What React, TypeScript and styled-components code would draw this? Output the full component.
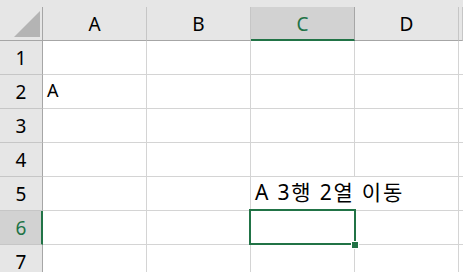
import * as React from "react";
import styled, { createGlobalStyle, css } from "styled-components";

const GREEN = "#217346";
const COLS = "43px repeat(4, 104px) 1fr";

const GlobalStyle = createGlobalStyle`
  html, body {
    margin: 0;
    padding: 0;
    background: #ffffff;
    overflow: hidden;
  }
`;

const Sheet = styled.div`
  width: 463px;
  height: 272px;
  overflow: hidden;
  background: #ffffff;
  font-family: "Noto Sans", "Noto Sans CJK KR", sans-serif;
  color: #000000;
`;

const HeaderRow = styled.div`
  display: grid;
  grid-template-columns: ${COLS};
  padding-top: 7px;
  background: #e6e6e6;
`;

const Corner = styled.div`
  height: 34px;
  box-sizing: border-box;
  border-right: 1px solid #a6a6a6;
  border-bottom: 1px solid #a6a6a6;
  display: flex;
  justify-content: flex-end;
  align-items: flex-end;
  padding: 0 2px 3px 0;
`;

const ColHeader = styled.div<{ $active?: boolean }>`
  height: 34px;
  box-sizing: border-box;
  border-right: 1px solid #c6c6c6;
  border-bottom: 1px solid #a6a6a6;
  display: flex;
  align-items: center;
  justify-content: center;
  font-size: 19px;
  padding-top: 1px;
  ${({ $active }) =>
    $active &&
    css`
      background: #d2d2d2;
      color: ${GREEN};
      border-bottom: 2px solid ${GREEN};
      border-right-color: #a6a6a6;
    `}
`;

const Body = styled.div`
  display: grid;
  grid-template-columns: ${COLS};
  grid-auto-rows: 34px;
`;

const RowHeader = styled.div<{ $active?: boolean }>`
  box-sizing: border-box;
  background: #e6e6e6;
  border-right: 1px solid #a6a6a6;
  border-bottom: 1px solid #c6c6c6;
  display: flex;
  align-items: center;
  justify-content: center;
  font-size: 19px;
  ${({ $active }) =>
    $active &&
    css`
      background: #d2d2d2;
      color: ${GREEN};
      border-right: 2px solid ${GREEN};
      padding-left: 1px;
    `}
`;

const Cell = styled.div<{ $spill?: boolean; $selected?: boolean }>`
  position: relative;
  box-sizing: border-box;
  border-right: 1px solid ${({ $spill }) => ($spill ? "transparent" : "#d4d4d4")};
  border-bottom: 1px solid #d4d4d4;
  display: flex;
  align-items: flex-end;
  padding: 0 0 6px 4px;
  font-size: 18px;
  white-space: nowrap;
  ${({ $selected }) =>
    $selected &&
    css`
      z-index: 1;
      &::before {
        content: "";
        position: absolute;
        top: -2px;
        left: -2px;
        right: -2px;
        bottom: -1px;
        border: 2px solid ${GREEN};
      }
      &::after {
        content: "";
        position: absolute;
        right: -4px;
        bottom: -4px;
        width: 6px;
        height: 6px;
        background: ${GREEN};
        box-shadow: 0 0 0 1px #ffffff;
      }
    `}
`;

const Hangul = styled.span`
  font-size: 21px;
  letter-spacing: 1.8px;
  line-height: 1;
  margin-bottom: 1px;
`;

function CornerMark() {
  return (
    <svg width="26" height="26" viewBox="0 0 26 26">
      <polygon points="0,26 26,26 26,0" fill="#b4b4b4" />
    </svg>
  );
}

const columns = ["A", "B", "C", "D", ""];

const cells: Record<string, React.ReactNode> = {
  "2-0": "A",
  "5-2": <Hangul>A 3행 2열 이동</Hangul>,
};

export default function App() {
  return (
    <>
      <GlobalStyle />
      <Sheet>
        <HeaderRow>
          <Corner>
            <CornerMark />
          </Corner>
          {columns.map((c, i) => (
            <ColHeader key={i} $active={c === "C"}>
              {c}
            </ColHeader>
          ))}
        </HeaderRow>
        <Body>
          {[1, 2, 3, 4, 5, 6, 7].map((row) => (
            <React.Fragment key={row}>
              <RowHeader $active={row === 6}>{row}</RowHeader>
              {columns.map((_, ci) => (
                <Cell
                  key={ci}
                  $spill={row === 5 && ci === 2}
                  $selected={row === 6 && ci === 2}
                >
                  {cells[`${row}-${ci}`]}
                </Cell>
              ))}
            </React.Fragment>
          ))}
        </Body>
      </Sheet>
    </>
  );
}
